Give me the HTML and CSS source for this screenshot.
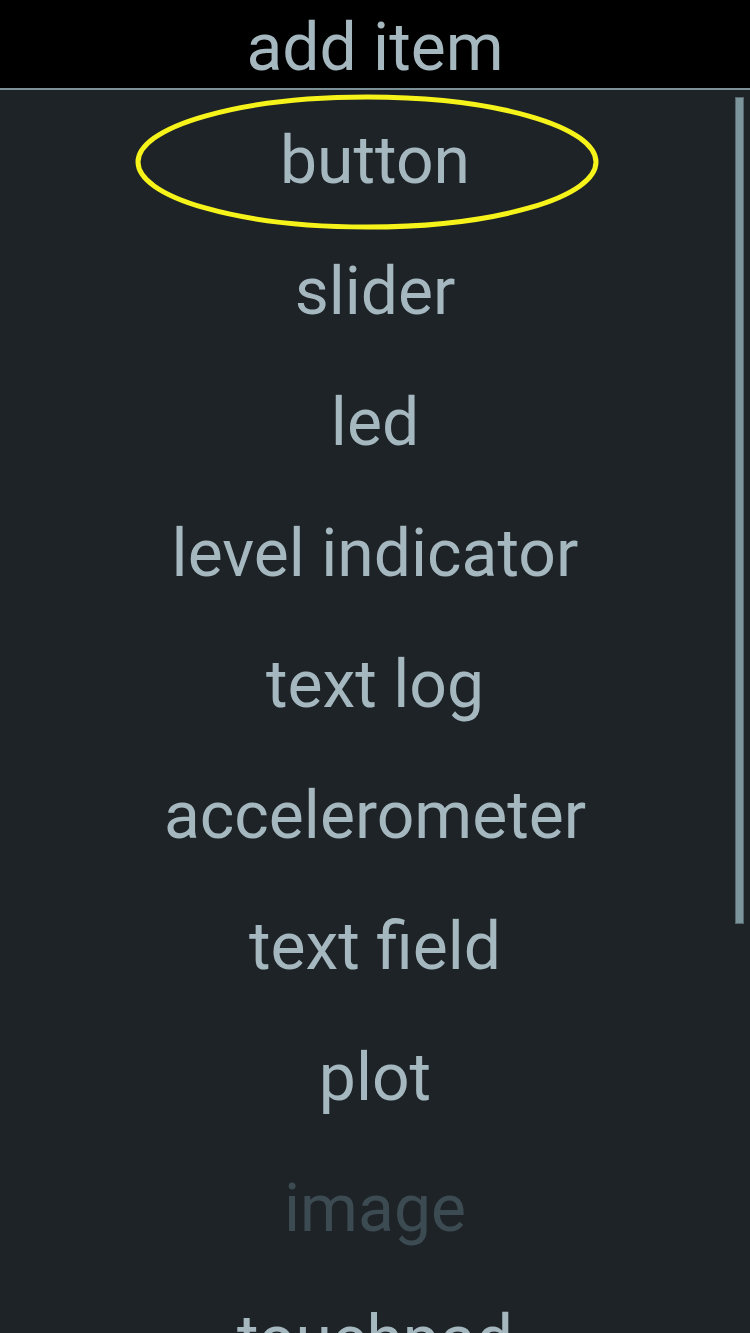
FILE: index.html
```html
<!DOCTYPE html>
<html lang="en">
<head>
    <meta charset="UTF-8">
    <meta name="viewport" content="width=device-width, initial-scale=1.0">
    <title>add item</title>
    <link rel="stylesheet" href="styles.css">
</head>
<body>
    <div class="title-bar">add item</div>

    <div class="item-list">
        <div class="item">button</div>
        <div class="item">slider</div>
        <div class="item">led</div>
        <div class="item">level indicator</div>
        <div class="item">text log</div>
        <div class="item">accelerometer</div>
        <div class="item">text field</div>
        <div class="item">plot</div>
        <div class="item disabled">image</div>
        <div class="item">touchpad</div>

        <!-- highlight ring round the first entry -->
        <svg class="highlight" width="470" height="140" viewBox="0 0 470 140">
            <ellipse cx="232" cy="69" rx="229" ry="65" fill="none" stroke="#f6f31a" stroke-width="5"/>
        </svg>

        <div class="scrollbar"></div>
    </div>
</body>
</html>
```

FILE: styles.css
```css
/* General body styling */
body {
    margin: 0;
    height: 1333px;
    overflow: hidden;
    background-color: #1e2327;
    font-family: "Roboto", "Liberation Sans", sans-serif;
    color: #a5b8bf;
}

.title-bar {
    height: 80px;
    padding-top: 8px;
    line-height: 80px;
    font-size: 66px;
    text-align: center;
    background: #000;
    border-bottom: 2px solid #7b9197;
}

.item-list {
    position: relative;
    padding-top: 5px;
}

.item {
    font-size: 66px;
    line-height: 131px;
    text-align: center;
}

.item.disabled {
    color: #3c4a52;
}

.highlight {
    position: absolute;
    left: 135px;
    top: 3px;
}

.scrollbar {
    position: absolute;
    top: 7px;
    right: 6px;
    width: 7px;
    height: 825px;
    background: #7c949b;
    border: 1px solid #56686d;
}
```
